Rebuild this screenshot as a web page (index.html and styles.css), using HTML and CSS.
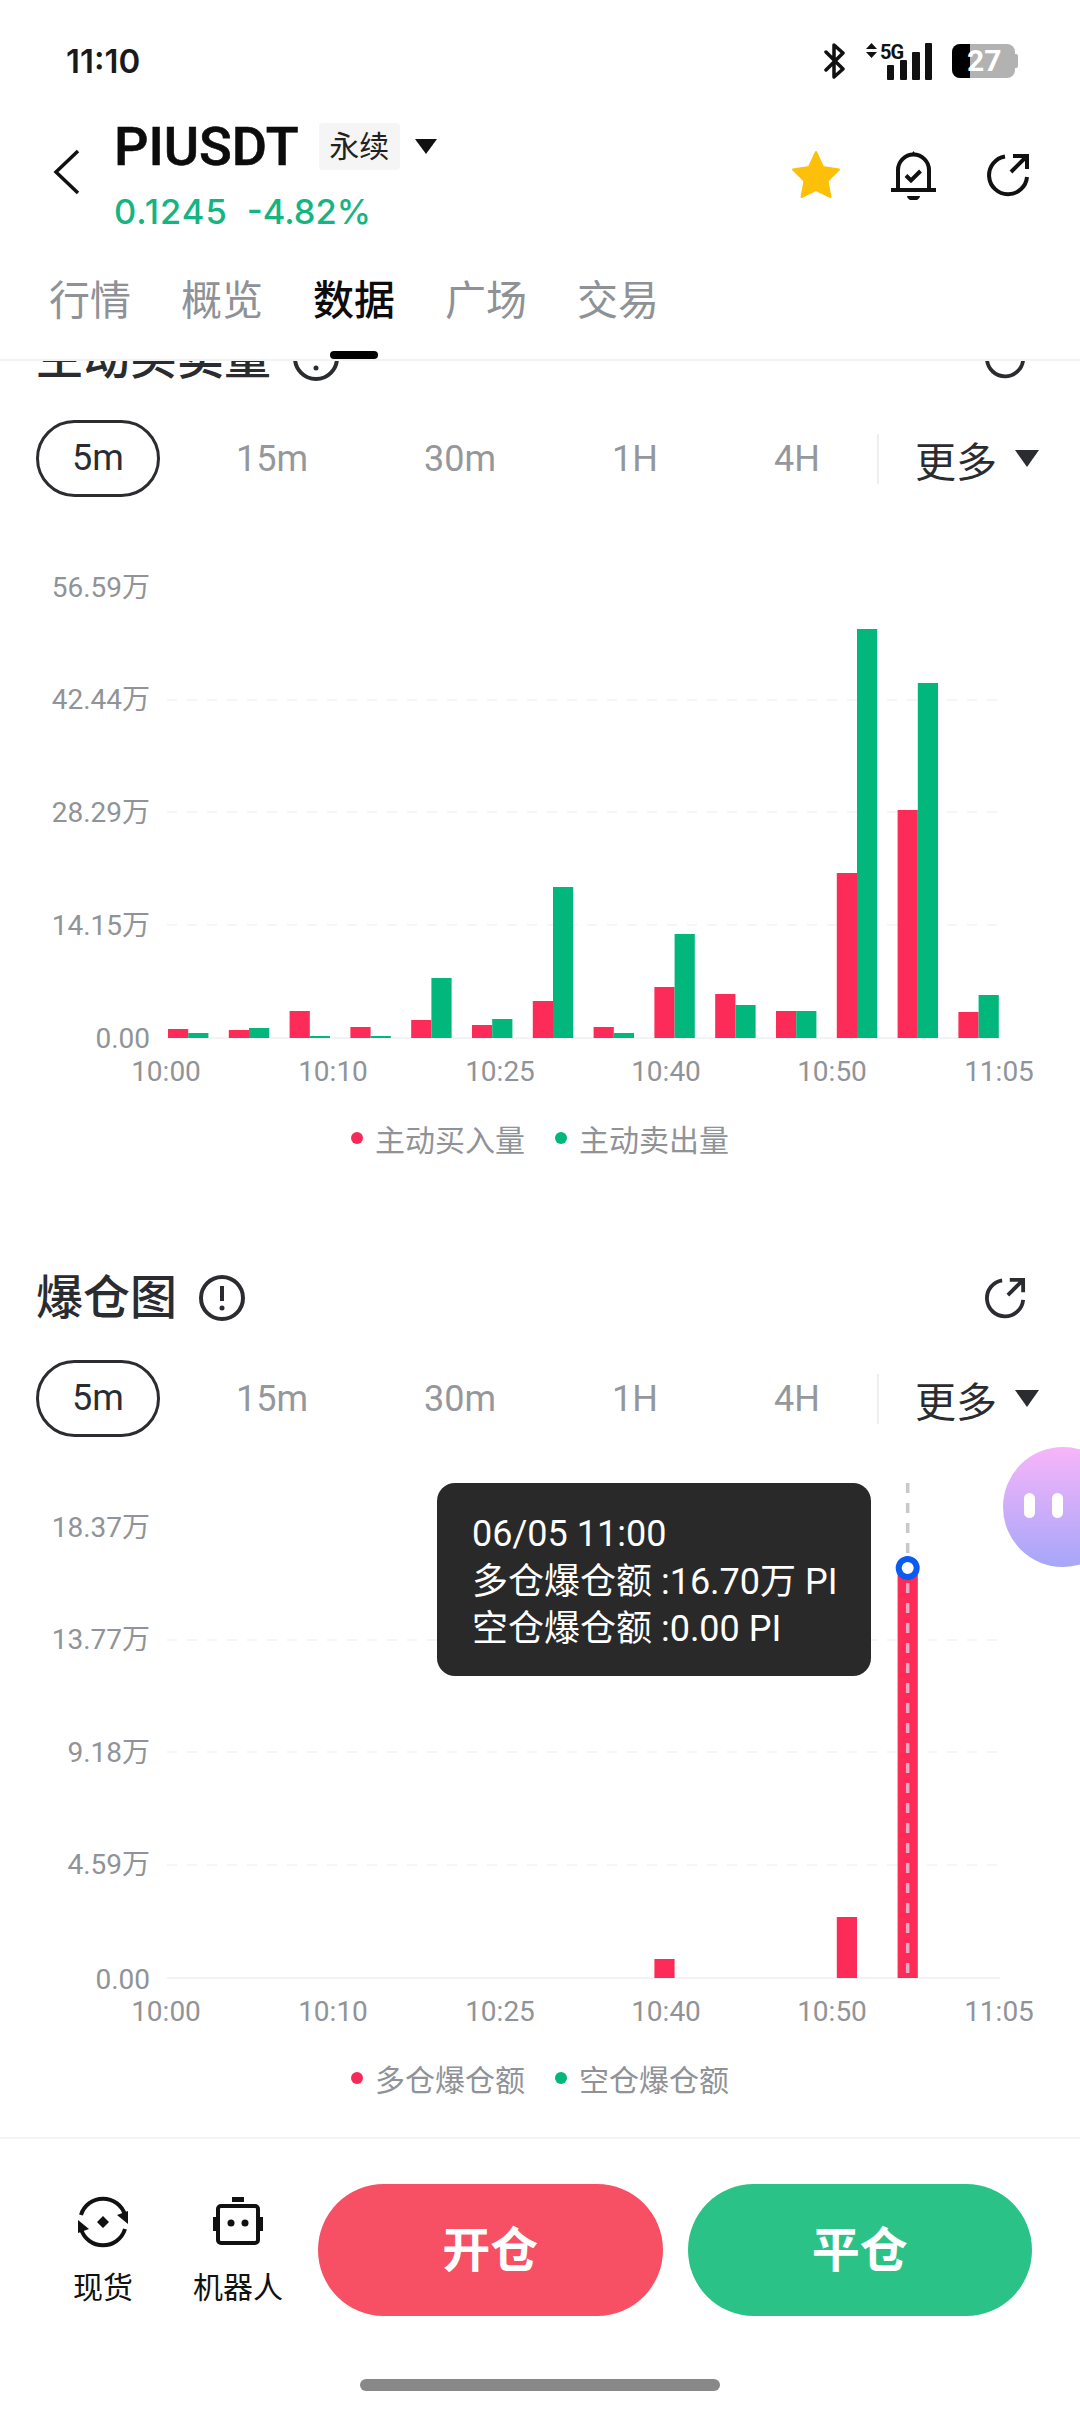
FILE: index.html
```html
<!DOCTYPE html>
<html lang="zh-CN">
<head>
    <meta charset="UTF-8">
    <meta name="viewport" content="width=device-width, initial-scale=1.0">
    <title>PIUSDT 数据</title>
    <link rel="stylesheet" href="styles.css">
</head>
<body>
<div class="app">
    <header class="top">
        <div class="status">
            <span class="time">11:10</span>
            <div class="status-icons">
                <svg class="bt" width="22" height="38" viewBox="0 0 22 38"><path d="M2 10 L19 27 L10 35 V3 L19 11 L2 28"/></svg>
                <div class="net">
                    <svg class="net-arrows" width="11" height="15" viewBox="0 0 11 15"><path d="M5.5 0 L11 6 H0 Z M0 9 H11 L5.5 15 Z"/></svg>
                    <span class="net-label">5G</span>
                    <svg class="net-bars" width="46" height="37" viewBox="0 0 46 37"><rect x="1" y="22" width="7" height="15" rx="1"/><rect x="14" y="17" width="7" height="20" rx="1"/><rect x="26" y="9" width="8" height="28" rx="1"/><rect x="39" y="0" width="7" height="37" rx="1"/></svg>
                </div>
                <div class="battery"><span class="battery-fill"></span><span class="battery-text">27</span></div>
            </div>
        </div>
        <div class="title-row">
            <svg class="back" width="28" height="46" viewBox="0 0 28 46"><path d="M25 2 L3 23 L25 44"/></svg>
            <div class="title-main">
                <div class="title-line">
                    <span class="symbol">PIUSDT</span>
                    <span class="tag">永续</span>
                    <span class="caret"></span>
                </div>
                <div class="price"><span class="last">0.1245</span><span>-4.82%</span></div>
            </div>
            <div class="title-actions">
                <svg width="50" height="50" viewBox="0 0 50 50"><path class="star" d="M25 2 L32 17 L48 19.500 L36.500 31 L39.500 47 L25 40 L10.500 47 L13.500 31 L2 19.500 L18 17 Z"/></svg>
                <svg class="line-icon" width="45" height="50" viewBox="0 0 45 50"><path d="M7 40 V20 A15.500 15.500 0 0 1 38 20 V40 M0 40 H45 M15 25.500 L20 30.500 L29.500 21"/><path class="solid" d="M20 5 L22.500 1 L25 5 Z M16 46 H29 A6.500 4.500 0 0 1 16 46 Z"/></svg>
                <svg class="line-icon" width="44" height="44" viewBox="0 0 44 44"><path d="M19 3.500 A19 19 0 1 0 41 24 M25 19 L41 3 M27 3 H41 V16"/></svg>
            </div>
        </div>
        <nav class="tabs">
            <span class="tab">行情</span>
            <span class="tab">概览</span>
            <span class="tab active">数据</span>
            <span class="tab">广场</span>
            <span class="tab">交易</span>
        </nav>
    </header>

    <main class="content">
        <section class="panel panel-first">
            <div class="panel-head">
                <h2>主动买卖量</h2>
                <svg class="info" width="46" height="46" viewBox="0 0 46 46"><circle cx="23" cy="23" r="21"/><path d="M23 11 V26"/><circle class="dot" cx="23" cy="33" r="2.500"/></svg>
                <svg class="share" width="42" height="42" viewBox="0 0 44 44"><path d="M19 3.500 A19 19 0 1 0 41 24 M25 19 L41 3 M27 3 H41 V16"/></svg>
            </div>
            <div class="ranges">
                <span class="range active">5m</span>
                <span class="range">15m</span>
                <span class="range">30m</span>
                <span class="range">1H</span>
                <span class="range">4H</span>
                <div class="more"><span>更多</span><span class="caret caret-small"></span></div>
            </div>
            <div class="chart">
                <svg class="plot" width="1080" height="613" viewBox="0 0 1080 613">
                    <path class="grid" d="M167 203 H1000 M167 315 H1000 M167 428 H1000"/>
                    <path class="base" d="M167 541 H1000"/>
                    <g class="axis axis-y">
                        <text x="150" y="90">56.59万</text>
                        <text x="150" y="202">42.44万</text>
                        <text x="150" y="315">28.29万</text>
                        <text x="150" y="428">14.15万</text>
                        <text x="150" y="541">0.00</text>
                    </g>
                    <g class="axis axis-x">
                        <text x="166" y="574">10:00</text>
                        <text x="333" y="574">10:10</text>
                        <text x="500" y="574">10:25</text>
                        <text x="666" y="574">10:40</text>
                        <text x="832" y="574">10:50</text>
                        <text x="999" y="574">11:05</text>
                    </g>
                    <g class="bars-buy">
                        <rect x="168" y="532" width="20.200" height="9"/>
                        <rect x="228.800" y="533" width="20.200" height="8"/>
                        <rect x="289.600" y="514" width="20.200" height="27"/>
                        <rect x="350.400" y="530" width="20.200" height="11"/>
                        <rect x="411.200" y="523" width="20.200" height="18"/>
                        <rect x="472" y="528" width="20.200" height="13"/>
                        <rect x="532.800" y="504" width="20.200" height="37"/>
                        <rect x="593.600" y="530" width="20.200" height="11"/>
                        <rect x="654.400" y="490" width="20.200" height="51"/>
                        <rect x="715.200" y="497" width="20.200" height="44"/>
                        <rect x="776" y="514" width="20.200" height="27"/>
                        <rect x="836.800" y="376" width="20.200" height="165"/>
                        <rect x="897.600" y="313" width="20.200" height="228"/>
                        <rect x="958.400" y="515" width="20.200" height="26"/>
                    </g>
                    <g class="bars-sell">
                        <rect x="188.200" y="536" width="20.200" height="5"/>
                        <rect x="249" y="531" width="20.200" height="10"/>
                        <rect x="309.800" y="539" width="20.200" height="2"/>
                        <rect x="370.600" y="539" width="20.200" height="2"/>
                        <rect x="431.400" y="481" width="20.200" height="60"/>
                        <rect x="492.200" y="522" width="20.200" height="19"/>
                        <rect x="553" y="390" width="20.200" height="151"/>
                        <rect x="613.800" y="536" width="20.200" height="5"/>
                        <rect x="674.600" y="437" width="20.200" height="104"/>
                        <rect x="735.400" y="508" width="20.200" height="33"/>
                        <rect x="796.200" y="514" width="20.200" height="27"/>
                        <rect x="857" y="132" width="20.200" height="409"/>
                        <rect x="917.800" y="186" width="20.200" height="355"/>
                        <rect x="978.600" y="498" width="20.200" height="43"/>
                    </g>
                </svg>
            </div>
            <div class="legend">
                <span class="legend-item"><i class="dot-buy"></i>主动买入量</span>
                <span class="legend-item"><i class="dot-sell"></i>主动卖出量</span>
            </div>
        </section>

        <section class="panel">
            <div class="panel-head">
                <h2>爆仓图</h2>
                <svg class="info" width="46" height="46" viewBox="0 0 46 46"><circle cx="23" cy="23" r="21"/><path d="M23 11 V26"/><circle class="dot" cx="23" cy="33" r="2.500"/></svg>
                <svg class="share" width="42" height="42" viewBox="0 0 44 44"><path d="M19 3.500 A19 19 0 1 0 41 24 M25 19 L41 3 M27 3 H41 V16"/></svg>
            </div>
            <div class="ranges">
                <span class="range active">5m</span>
                <span class="range">15m</span>
                <span class="range">30m</span>
                <span class="range">1H</span>
                <span class="range">4H</span>
                <div class="more"><span>更多</span><span class="caret caret-small"></span></div>
            </div>
            <div class="chart">
                <svg class="plot" width="1080" height="613" viewBox="0 0 1080 613">
                    <path class="grid" d="M167 203 H1000 M167 315 H1000 M167 428 H1000"/>
                    <path class="base" d="M167 541 H1000"/>
                    <g class="axis axis-y">
                        <text x="150" y="90">18.37万</text>
                        <text x="150" y="202">13.77万</text>
                        <text x="150" y="315">9.18万</text>
                        <text x="150" y="427">4.59万</text>
                        <text x="150" y="542">0.00</text>
                    </g>
                    <g class="axis axis-x">
                        <text x="166" y="574">10:00</text>
                        <text x="333" y="574">10:10</text>
                        <text x="500" y="574">10:25</text>
                        <text x="666" y="574">10:40</text>
                        <text x="832" y="574">10:50</text>
                        <text x="999" y="574">11:05</text>
                    </g>
                    <g class="bars-buy">
                        <rect x="654.400" y="522" width="20.200" height="19"/>
                        <rect x="836.800" y="480" width="20.200" height="61"/>
                        <rect x="897.600" y="130" width="20.200" height="411"/>
                    </g>
                    <path class="cursor" d="M907.700 46 V122"/>
                    <path class="cursor cursor-on-bar" d="M907.700 146 V541"/>
                    <circle class="marker" cx="907.700" cy="131" r="9"/>
                </svg>
                <div class="tooltip">
                    <div>06/05 11:00</div>
                    <div>多仓爆仓额 :16.70万 PI</div>
                    <div>空仓爆仓额 :0.00 PI</div>
                </div>
            </div>
            <div class="legend">
                <span class="legend-item"><i class="dot-buy"></i>多仓爆仓额</span>
                <span class="legend-item"><i class="dot-sell"></i>空仓爆仓额</span>
            </div>
        </section>
    </main>

    <footer class="bottom">
        <div class="actions">
            <div class="tools">
                <div class="tool">
                    <svg class="tool-icon" width="54" height="54" viewBox="0 0 54 54"><path d="M5 20 A23 23 0 0 1 49 20 M49 34 A23 23 0 0 1 5 34"/><path class="solid" d="M41 20 L52 16 V29 Z M13 34 L2 38 V25 Z M27 21 L33 27 L27 33 L21 27 Z"/></svg>
                    <span>现货</span>
                </div>
                <div class="tool">
                    <svg class="tool-icon" width="54" height="54" viewBox="0 0 54 54"><rect class="solid" x="21" y="2" width="12" height="5"/><rect x="7" y="11" width="40" height="37" rx="3"/><rect class="solid" x="2" y="22" width="4" height="14"/><rect class="solid" x="48" y="22" width="4" height="14"/><circle class="solid" cx="20" cy="28" r="3.500"/><circle class="solid" cx="34" cy="28" r="3.500"/></svg>
                    <span>机器人</span>
                </div>
            </div>
            <button class="btn btn-open">开仓</button>
            <button class="btn btn-close">平仓</button>
        </div>
        <div class="home-bar"></div>
    </footer>

    <div class="assistant"><i></i><i></i></div>
</div>
</body>
</html>
```

FILE: styles.css
```css
* {
    box-sizing: border-box;
}

body {
    margin: 0;
    background: #fff;
    font-family: Roboto, "Noto Sans CJK SC", sans-serif;
    color: #2a2c30;
}

.app {
    position: relative;
    width: 1080px;
    height: 2412px;
    display: flex;
    flex-direction: column;
    overflow: hidden;
    background: #fff;
}

/* top area */

.top {
    position: relative;
    z-index: 2;
    height: 361px;
    flex-shrink: 0;
    background: #fff;
    border-bottom: 2px solid #f2f2f3;
}

.status {
    height: 110px;
    padding: 30px 65px 0 66px;
    display: flex;
    justify-content: space-between;
    align-items: flex-start;
}

.time {
    font-family: Inter, sans-serif;
    font-size: 33px;
    font-weight: 600;
    line-height: 62px;
    color: #1a1a1a;
}

.status-icons {
    display: flex;
    align-items: center;
    height: 62px;
    gap: 20px;
}

.bt {
    fill: none;
    stroke: #111;
    stroke-width: 3.500;
    stroke-linejoin: round;
    stroke-linecap: round;
}

.net {
    position: relative;
    width: 66px;
    height: 37px;
    display: flex;
    justify-content: flex-end;
}

.net-arrows {
    position: absolute;
    left: 0;
    top: 0;
    fill: #111;
}

.net-label {
    position: absolute;
    left: 14px;
    top: -3px;
    font-size: 20px;
    font-weight: 700;
    letter-spacing: -1px;
    color: #111;
}

.net-bars {
    fill: #111;
}

.battery {
    position: relative;
    width: 63px;
    height: 34px;
    border-radius: 8px;
    background: #b2b2b2;
    overflow: visible;
}

.battery::after {
    content: "";
    position: absolute;
    right: -3px;
    top: 10px;
    width: 3px;
    height: 14px;
    border-radius: 0 2px 2px 0;
    background: #b2b2b2;
}

.battery-fill {
    position: absolute;
    left: 0;
    top: 0;
    bottom: 0;
    width: 18px;
    border-radius: 8px 0 0 8px;
    background: #000;
}

.battery-text {
    position: absolute;
    left: 15px;
    top: 0;
    font-size: 30px;
    font-weight: 700;
    line-height: 34px;
    color: #fff;
}

.title-row {
    height: 130px;
    padding: 0 50px 0 53px;
    display: flex;
    align-items: center;
}

.back {
    margin-top: -6px;
    fill: none;
    stroke: #111;
    stroke-width: 3.500;
}

.title-main {
    margin-left: 33px;
    margin-top: -6px;
}

.title-line {
    display: flex;
    align-items: center;
    height: 72px;
}

.symbol {
    font-size: 54px;
    font-weight: 500;
    color: #0c0c0c;
    -webkit-text-stroke: 0.6px #0c0c0c;
}

.tag {
    margin-left: 20px;
    width: 81px;
    height: 47px;
    background: #f5f5f5;
    border-radius: 4px;
    font-size: 30px;
    line-height: 47px;
    text-align: center;
    color: #222;
}

.caret {
    display: inline-block;
    margin-left: 15px;
    width: 0;
    height: 0;
    border-left: 11px solid transparent;
    border-right: 11px solid transparent;
    border-top: 15px solid #111;
}

.caret-small {
    margin-left: 18px;
    border-left-width: 12px;
    border-right-width: 12px;
    border-top: 17px solid #2a2c30;
}

.price {
    display: flex;
    gap: 19px;
    margin-top: 8px;
    font-family: Inter, sans-serif;
    font-size: 34.500px;
    font-weight: 500;
    line-height: 44px;
    color: #14b583;
}

.price .last {
    letter-spacing: 1px;
}

.title-actions {
    margin-left: auto;
    display: flex;
    align-items: center;
    gap: 50px;
}

.star {
    fill: #fcc00a;
    stroke: #fcc00a;
    stroke-width: 2;
    stroke-linejoin: round;
}

.line-icon {
    fill: none;
    stroke: #111;
    stroke-width: 4;
}

.line-icon .solid {
    fill: #111;
    stroke: none;
}

.tabs {
    height: 119px;
    padding: 0 0 5px 49px;
    display: flex;
    align-items: flex-start;
    gap: 50px;
}

.tab {
    position: relative;
    height: 119px;
    font-size: 41px;
    line-height: 122px;
    color: #8e9196;
}

.tab.active {
    font-weight: 500;
    color: #0c0c0c;
}

.tab.active::after {
    content: "";
    position: absolute;
    left: 17px;
    top: 111px;
    width: 48px;
    height: 8px;
    border-radius: 4px;
    background: #000;
}

/* chart panels */

.content {
    flex: 1;
    overflow: hidden;
}

.panel {
    margin-bottom: 102px;
}

.panel-first {
    margin-top: -31px;
}

.panel-head {
    height: 56px;
    padding: 0 54px 0 36px;
    display: flex;
    align-items: center;
}

.panel-head h2 {
    margin: 0;
    font-size: 47px;
    font-weight: 500;
    line-height: 56px;
}

.info {
    margin-left: 22px;
    fill: none;
    stroke: #2a2c30;
    stroke-width: 4;
}

.info .dot {
    fill: #2a2c30;
    stroke: none;
}

.share {
    margin-left: auto;
    fill: none;
    stroke: #2a2c30;
    stroke-width: 4;
}

.ranges {
    margin-top: 34px;
    height: 77px;
    padding: 0 40px 0 36px;
    display: flex;
    align-items: center;
    gap: 36px;
}

.range {
    flex-shrink: 0;
    padding: 0 40px;
    font-size: 36px;
    color: #94979c;
}

.range.active {
    width: 124px;
    height: 77px;
    padding: 0;
    border: 3px solid #2a2c30;
    border-radius: 39px;
    line-height: 71px;
    text-align: center;
    color: #2a2c30;
}

.more {
    margin-left: -19px;
    height: 50px;
    padding-left: 36px;
    display: flex;
    align-items: center;
    flex-shrink: 0;
    border-left: 2px solid #eceef0;
    font-size: 41px;
    white-space: nowrap;
}

.chart {
    position: relative;
    height: 613px;
}

.plot {
    display: block;
}

.grid {
    fill: none;
    stroke: #f3f4f5;
    stroke-width: 1.500;
    stroke-dasharray: 10 10;
}

.base {
    fill: none;
    stroke: #f2f3f5;
    stroke-width: 2;
}

.axis text {
    font-size: 28px;
    fill: #909398;
    dominant-baseline: central;
}

.axis-y text {
    text-anchor: end;
}

.axis-x text {
    text-anchor: middle;
}

.bars-buy {
    fill: #fc2b58;
}

.bars-sell {
    fill: #02b77b;
}

.cursor {
    fill: none;
    stroke: #c9c9cb;
    stroke-width: 3.500;
    stroke-dasharray: 10 10;
}

.cursor-on-bar {
    stroke: #e6a9c0;
}

.marker {
    fill: #fff;
    stroke: #0a5cf0;
    stroke-width: 6;
}

.tooltip {
    position: absolute;
    left: 437px;
    top: 46px;
    width: 434px;
    height: 193px;
    padding: 28px 0 0 35px;
    border-radius: 18px;
    background: #292929;
    font-size: 36px;
    line-height: 47.500px;
    white-space: nowrap;
    color: #fff;
}

.legend {
    height: 60px;
    margin-top: -2px;
    display: flex;
    justify-content: center;
    align-items: center;
    gap: 30px;
}

.legend-item {
    display: flex;
    align-items: center;
    gap: 12px;
    font-size: 30px;
    color: #8f9297;
}

.legend-item i {
    width: 12px;
    height: 12px;
    border-radius: 50%;
}

.dot-buy {
    background: #f62a58;
}

.dot-sell {
    background: #02b77b;
}

/* bottom bar */

.bottom {
    height: 275px;
    flex-shrink: 0;
    padding-top: 45px;
    border-top: 2px solid #f4f4f4;
    background: #fff;
}

.actions {
    height: 132px;
    padding: 0 48px 0 50px;
    display: flex;
    gap: 25px;
}

.tools {
    display: flex;
    gap: 29px;
    margin-right: 2px;
    flex-shrink: 0;
}

.tool {
    width: 106px;
    display: flex;
    flex-direction: column;
    align-items: center;
    padding-top: 11px;
    font-size: 30px;
    color: #111;
}

.tool span {
    margin-top: 19px;
    line-height: 40px;
    white-space: nowrap;
}

.tool-icon {
    fill: none;
    stroke: #111;
    stroke-width: 4;
}

.tool-icon .solid {
    fill: #111;
    stroke: none;
}

.btn {
    flex: 1;
    padding: 0 0 9px;
    border: 0;
    border-radius: 66px;
    font-family: inherit;
    font-size: 48px;
    font-weight: 700;
    color: #fff;
}

.btn-open {
    background: #f74f63;
}

.btn-close {
    background: #2bc287;
}

.home-bar {
    width: 360px;
    height: 12px;
    margin: 63px auto 0;
    border-radius: 6px;
    background: #888;
}

/* floating assistant */

.assistant {
    position: absolute;
    z-index: 3;
    right: -43px;
    top: 1447px;
    width: 120px;
    height: 120px;
    padding: 46px 0 0 21px;
    border-radius: 60px;
    background: linear-gradient(#f7b5f9, #a6a6f9);
    display: flex;
    gap: 17px;
}

.assistant i {
    width: 11px;
    height: 25px;
    border-radius: 6px;
    background: #fff;
}
```
